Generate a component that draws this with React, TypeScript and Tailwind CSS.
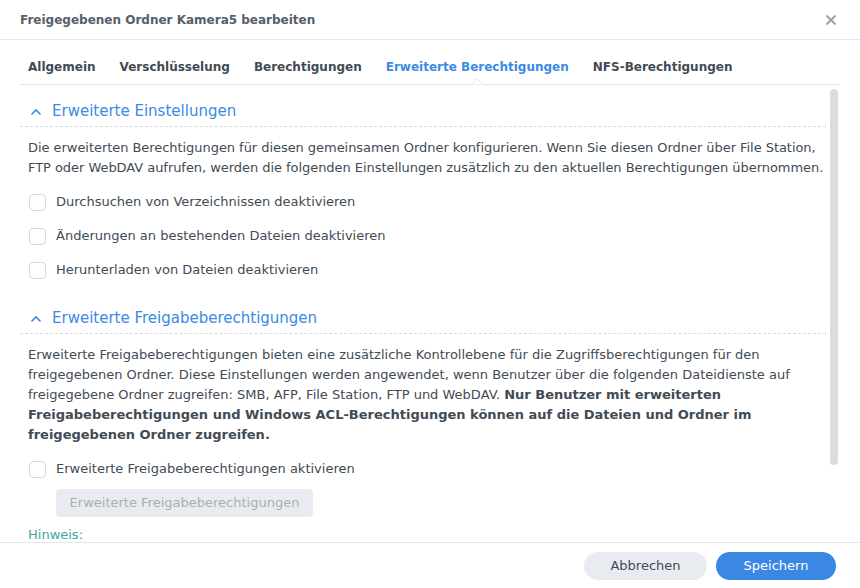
import React from "react";

const font = { fontFamily: '"DejaVu Sans", Verdana, sans-serif' };

function Chevron() {
  return (
    <svg width="12" height="8" viewBox="0 0 12 8" className="mr-[10px]">
      <polyline points="1.5,6.5 6,2 10.5,6.5" fill="none" stroke="#3b8ae5" strokeWidth="1.6" />
    </svg>
  );
}

function SectionHead({ title }: { title: string }) {
  return (
    <div className="flex items-center h-[30px] pl-[10px] mr-[4px] border-b border-dashed border-[#d6dce2]">
      <Chevron />
      <span className="text-[15px] text-[#3b8ae5]">{title}</span>
    </div>
  );
}

function Check({ label }: { label: string }) {
  return (
    <div className="flex items-center h-[34px] pl-[9px]">
      <div className="w-[17px] h-[17px] rounded-[4px] border border-[#d3d9e0] bg-white mr-[10px]" />
      <span className="text-[13px] text-[#414b55]">{label}</span>
    </div>
  );
}

export default function App() {
  const tabs = ["Allgemein", "Verschlüsselung", "Berechtigungen", "Erweiterte Berechtigungen", "NFS-Berechtigungen"];
  return (
    <div className="w-[860px] h-[588px] bg-white flex flex-col overflow-hidden" style={font}>
      <div className="h-[40px] flex items-center justify-between px-5 border-b border-[#e3e7eb] shrink-0">
        <span className="text-[12px] font-bold text-[#55606b]">Freigegebenen Ordner Kamera5 bearbeiten</span>
        <svg width="12" height="12" viewBox="0 0 12 12" className="mr-[3px]">
          <path d="M1.5 1.5 L10.5 10.5 M10.5 1.5 L1.5 10.5" stroke="#9aa2aa" strokeWidth="2" />
        </svg>
      </div>
      <div className="px-5 shrink-0">
        <div className="flex h-[45px] items-center border-b border-[#dfe4ea] pl-2 gap-[24px]">
          {tabs.map((t, i) => (
            <div key={t} className="relative h-full flex items-center pt-[9px]">
              <span className={"text-[12px] font-bold " + (i === 3 ? "text-[#3b8ae5]" : "text-[#414b55]")}>{t}</span>
              {i === 3 && (
                <svg width="12" height="7" viewBox="0 0 12 7" className="absolute left-1/2 -translate-x-1/2 bottom-[-1px]">
                  <polyline points="0,6.5 6,0.8 12,6.5" fill="white" stroke="#dfe4ea" strokeWidth="1" />
                </svg>
              )}
            </div>
          ))}
        </div>
      </div>
      <div className="flex-1 flex min-h-0 pl-5 pr-[22px]">
        <div className="flex-1 min-w-0 overflow-hidden">
          <div className="mt-[12px]">
            <SectionHead title="Erweiterte Einstellungen" />
            <p className="text-[13px] leading-[20px] text-[#414b55] pl-2 pt-[11px] pb-[7px] tracking-[-0.05px]">
              Die erweiterten Berechtigungen für diesen gemeinsamen Ordner konfigurieren. Wenn Sie diesen Ordner über File Station, FTP oder WebDAV aufrufen, werden die folgenden Einstellungen zusätzlich zu den aktuellen Berechtigungen übernommen.
            </p>
            <Check label="Durchsuchen von Verzeichnissen deaktivieren" />
            <Check label="Änderungen an bestehenden Dateien deaktivieren" />
            <Check label="Herunterladen von Dateien deaktivieren" />
          </div>
          <div className="mt-[17px]">
            <SectionHead title="Erweiterte Freigabeberechtigungen" />
            <p className="text-[13px] leading-[20px] text-[#414b55] pl-2 pt-[11px] pr-[20px] pb-[7px]">
              Erweiterte Freigabeberechtigungen bieten eine zusätzliche Kontrollebene für die Zugriffsberechtigungen für den freigegebenen Ordner. Diese Einstellungen werden angewendet, wenn Benutzer über die folgenden Dateidienste auf freigegebene Ordner zugreifen: SMB, AFP, File Station, FTP und WebDAV.{" "}
              <b>Nur Benutzer mit erweiterten Freigabeberechtigungen und Windows ACL-Berechtigungen können auf die Dateien und Ordner im freigegebenen Ordner zugreifen.</b>
            </p>
            <Check label="Erweiterte Freigabeberechtigungen aktivieren" />
            <div className="pt-[3px]">
              <div className="ml-[36px] w-[257px] h-[28px] rounded-[4px] bg-[#e8ecf0] flex items-center justify-center text-[13px] text-[#a9afb6]">
                Erweiterte Freigabeberechtigungen
              </div>
            </div>
            <div className="pl-2 pt-[9px] text-[13px] leading-[18px] text-[#3aa8a0]">Hinweis:</div>
          </div>
        </div>
        <div className="w-[8px] pt-[4px] shrink-0">
          <div className="w-[8px] h-[376px] rounded-full bg-[#dcdcdc]" />
        </div>
      </div>
      <div className="h-[46px] shrink-0 border-t border-[#e3e7eb] flex items-start justify-end pr-[24px] pt-[9px] gap-[9px]">
        <button className="w-[123px] h-[28px] rounded-full bg-[#e8ecf1] text-[13px] text-[#414b55]">Abbrechen</button>
        <button className="w-[120px] h-[28px] rounded-full bg-[#3a88e4] text-[13px] text-white">Speichern</button>
      </div>
    </div>
  );
}
